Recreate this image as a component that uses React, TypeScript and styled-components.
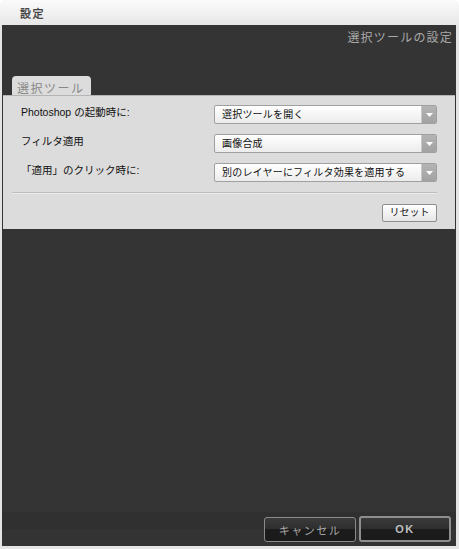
import React from "react";
import styled, { createGlobalStyle } from "styled-components";

const GlobalStyle = createGlobalStyle`
  html, body {
    margin: 0;
    padding: 0;
    background: #fff;
  }
  body {
    font-family: "Liberation Sans", "Noto Sans CJK JP", sans-serif;
  }
`;

const Window = styled.div`
  width: 459px;
  height: 549px;
  display: flex;
  flex-direction: column;
  background: #e4e4e4;
  border-radius: 8px 8px 0 0;
  overflow: hidden;
`;

const TitleBar = styled.div`
  height: 25px;
  flex: none;
  display: flex;
  align-items: center;
  padding-left: 20px;
  background: linear-gradient(#fbfbfb, #e7e7e7);
  font-size: 11px;
  color: #3c3c3c;
  letter-spacing: 1.5px;
  -webkit-text-stroke: 0.3px #3c3c3c;
`;

const Body = styled.div`
  flex: 1;
  display: flex;
  flex-direction: column;
  margin: 0 3px 3px 2px;
  background: #343434;
`;

const Header = styled.div`
  height: 51px;
  flex: none;
  text-align: right;
  padding: 3px 3px 0 0;
  box-sizing: border-box;
  font-size: 12px;
  color: #a8a8a8;
  letter-spacing: 1.2px;
`;

const TabRow = styled.div`
  display: flex;
  padding-left: 10px;
`;

const Tab = styled.div`
  width: 79px;
  height: 19px;
  box-sizing: border-box;
  padding: 3px 0 0 5px;
  background: #dcdcdc;
  border-radius: 4px 4px 0 0;
  font-size: 12px;
  color: #888;
  letter-spacing: 1.5px;
`;

const Panel = styled.div`
  margin: 0 1px;
  background: #dcdcdc;
  border-top: 1px solid #b4b4b4;
  padding: 9px 18px 7px 9px;
  display: flex;
  flex-direction: column;
`;

const Row = styled.div`
  display: flex;
  align-items: flex-start;
  height: 29px;
`;

const Label = styled.div`
  width: 202px;
  padding: 1px 0 0 9px;
  box-sizing: border-box;
  font-size: 10.5px;
  color: #111;
  line-height: 13px;
`;

const Select = styled.div`
  width: 223px;
  height: 19px;
  box-sizing: border-box;
  display: flex;
  border: 1px solid #a0a0a0;
  border-radius: 2px;
  background: linear-gradient(#ffffff, #ececec);
  overflow: hidden;
`;

const SelectText = styled.div`
  flex: 1;
  padding-left: 7px;
  font-size: 10px;
  letter-spacing: 0.2px;
  line-height: 17px;
  color: #111;
`;

const Arrow = styled.div`
  width: 14px;
  display: flex;
  align-items: center;
  justify-content: center;
  background: linear-gradient(#b4b4b4, #a2a2a2);
  border-left: 1px solid #c8c8c8;
`;

const Separator = styled.div`
  height: 1px;
  background: #bdbdbd;
  border-bottom: 1px solid #ececec;
  margin: 0 0 10px 0;
`;

const ResetRow = styled.div`
  display: flex;
  justify-content: flex-end;
`;

const ResetButton = styled.div`
  width: 55px;
  height: 18px;
  box-sizing: border-box;
  border: 1px solid #8c8c8c;
  border-radius: 2px;
  background: linear-gradient(#ffffff, #e6e6e6);
  font-size: 10px;
  line-height: 16px;
  text-align: center;
  color: #111;
`;

const Spacer = styled.div`
  flex: 1;
`;

const Footer = styled.div`
  height: 34px;
  flex: none;
  display: flex;
  justify-content: flex-end;
  align-items: flex-start;
  gap: 3px;
  padding: 4px 5px 0 0;
  box-sizing: border-box;
  background: linear-gradient(#303030 0, #303030 17px, #333 17px);
`;

const FooterButton = styled.div<{ $primary?: boolean }>`
  width: 92px;
  height: ${(p) => (p.$primary ? 26 : 25)}px;
  margin-top: ${(p) => (p.$primary ? 0 : 1)}px;
  box-sizing: border-box;
  border: ${(p) => (p.$primary ? "2px solid #8e8e8e" : "1px solid #8a8a8a")};
  border-radius: 3px;
  background: linear-gradient(#3a3a3a 0, #2e2e2e 50%, #1c1c1c 50%, #1a1a1a 100%);
  display: flex;
  align-items: center;
  justify-content: center;
  font-size: 11px;
  font-weight: ${(p) => (p.$primary ? "bold" : "normal")};
  color: ${(p) => (p.$primary ? "#bdbdbd" : "#a8a8a8")};
  letter-spacing: 1.5px;
`;

const ArrowIcon = () => (
  <svg width="7" height="4" viewBox="0 0 7 4">
    <path d="M0 0 L7 0 L3.5 4 Z" fill="#fff" />
  </svg>
);

const rows = [
  { label: "Photoshop の起動時に:", value: "選択ツールを開く" },
  { label: "フィルタ適用", value: "画像合成" },
  { label: "「適用」のクリック時に:", value: "別のレイヤーにフィルタ効果を適用する" },
];

export default function App() {
  return (
    <Window>
      <GlobalStyle />
      <TitleBar>設定</TitleBar>
      <Body>
        <Header>選択ツールの設定</Header>
        <TabRow>
          <Tab>選択ツール</Tab>
        </TabRow>
        <Panel>
          {rows.map((r) => (
            <Row key={r.label}>
              <Label>{r.label}</Label>
              <Select>
                <SelectText>{r.value}</SelectText>
                <Arrow>
                  <ArrowIcon />
                </Arrow>
              </Select>
            </Row>
          ))}
          <Separator />
          <ResetRow>
            <ResetButton>リセット</ResetButton>
          </ResetRow>
        </Panel>
        <Spacer />
        <Footer>
          <FooterButton>キャンセル</FooterButton>
          <FooterButton $primary>OK</FooterButton>
        </Footer>
      </Body>
    </Window>
  );
}
